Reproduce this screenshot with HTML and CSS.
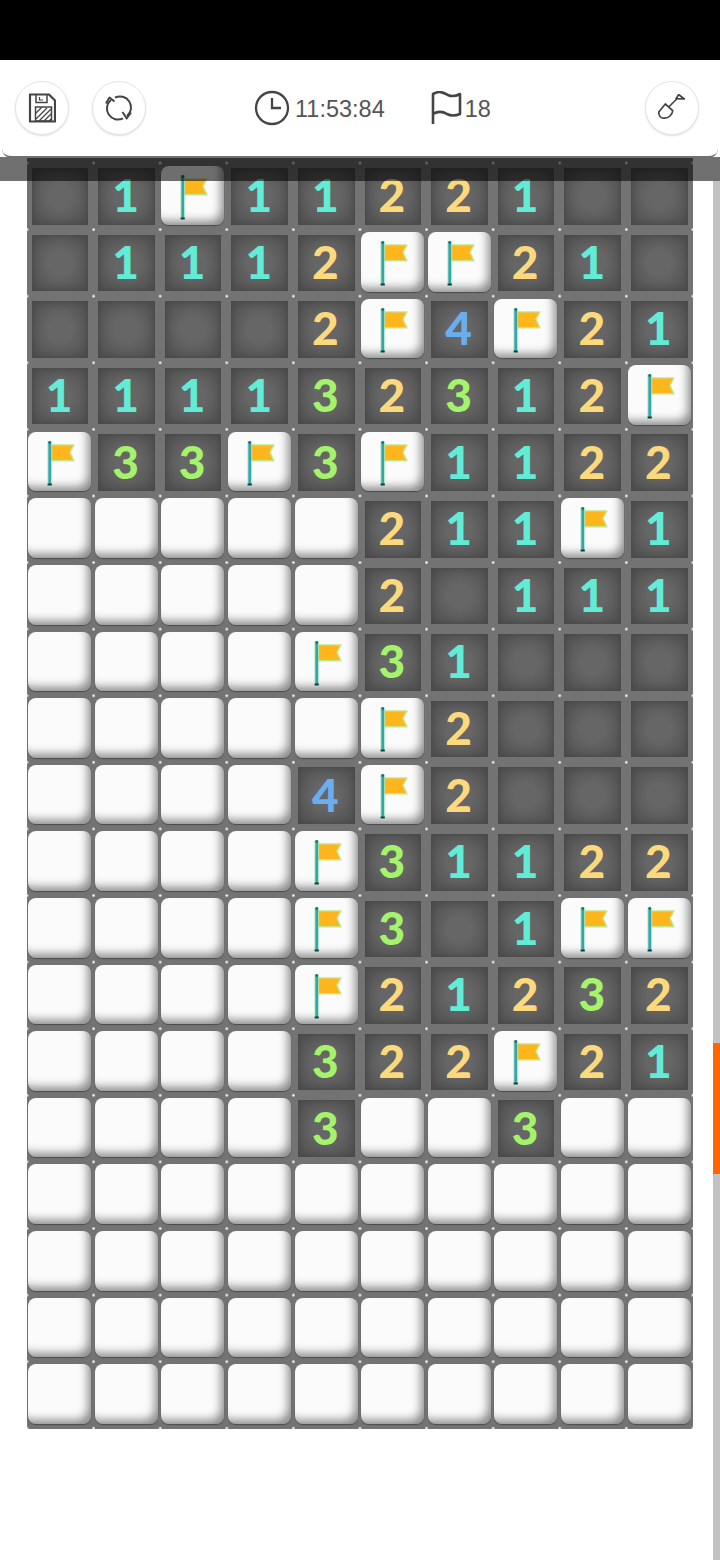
FILE: index.html
```html
<!DOCTYPE html>
<html>

<head>
    <meta charset="utf-8">
    <link rel="stylesheet" href="styles.css">
    <title>Minesweeper</title>
</head>

<body>
    <svg class="defs" width="0" height="0">
        <symbol id="flag" viewBox="0 0 63 60">
            <path d="M23 13 H46 L42 20.500 L46 29 H23 Z" fill="#ffb51c" stroke="#c4e88e" stroke-width="1.400" stroke-linejoin="round"/>
            <rect x="19" y="9.500" width="5.200" height="44" fill="#a9e6c0" opacity="0.600"/>
            <rect x="20.200" y="10" width="2.800" height="43" fill="#35a5a8"/>
            <rect x="20.200" y="9" width="2.800" height="3" rx="1.400" fill="#1f6f6c"/>
            <path d="M19.500 53.800 H23.700 V51.800 H19.500 Z" fill="#123f3c"/>
        </symbol>
    </svg>

    <div class="status"></div>

    <div class="top">
        <header class="toolbar">
            <button class="round">
                <svg width="28" height="30" viewBox="0 0 28 30" fill="none" stroke="#444" stroke-width="2.200">
                    <path d="M2 1.500 H21 L27 7.500 V28.500 H2 Z" stroke-linejoin="round"/>
                    <path d="M8 1.500 V9.500 H19 V1.500" stroke-width="1.500"/>
                    <path d="M11.500 4 V7 H15" stroke-width="1.200"/>
                    <path d="M7.500 14 H23.500 V28 H7.500 Z" stroke-width="1.500"/>
                    <path d="M8 20 L13.500 14.500 M8 26 L19 15 M11 28 L23 16 M16 28 L23 21 M21 28 L23 26" stroke-width="1.300"/>
                </svg>
            </button>
            <button class="round gap">
                <svg width="28" height="28" viewBox="0 0 28 28" fill="none" stroke="#444" stroke-width="2">
                    <path d="M10 3.700 A11 11 0 0 1 22 22"/>
                    <path d="M17.500 18 L21.700 24.500 L26 18.500" stroke-linejoin="round"/>
                    <path d="M18 24.300 A11 11 0 0 1 6 6"/>
                    <path d="M1 9.500 L4.500 3.500 L9.500 7.500" stroke-linejoin="round"/>
                </svg>
            </button>
            <div class="stats">
                <svg width="36" height="36" viewBox="0 0 36 36" fill="none" stroke="#444" stroke-width="2.300">
                    <circle cx="18" cy="18" r="16"/>
                    <path d="M18 8 V18 H27"/>
                </svg>
                <span class="time">11:53:84</span>
                <svg class="flag-ico" width="32" height="34" viewBox="0 0 32 34" fill="none" stroke="#444" stroke-width="2.600">
                    <path d="M3 33 V3 C10 -1 14 2 18 4 C22 6 26 5 30 3 V23 C25 25 21 25 17 23 C12 20 8 20 3 23" stroke-linejoin="round"/>
                </svg>
                <span class="count">18</span>
            </div>
            <button class="round right">
                <svg width="28" height="28" viewBox="0 0 28 28" fill="none" stroke="#444" stroke-width="1.700" stroke-linejoin="round">
                    <path d="M10.700 13 L19.700 4"/>
                    <path d="M20.700 0.500 L26.300 5 L18 4.700 Z"/>
                    <path d="M7.300 10 L14.700 16.700 C14.500 19 13.500 20.500 12 22 C10 24 7 24.500 4.500 24 C2 23.500 0.700 20.500 0.800 18 Z"/>
                </svg>
            </button>
        </header>
        <div class="band"></div>
    </div>

    <main class="board">
        <div class="cell open"></div><div class="cell open n1">1</div><div class="cell"><svg><use href="#flag"/></svg></div><div class="cell open n1">1</div><div class="cell open n1">1</div><div class="cell open n2">2</div><div class="cell open n2">2</div><div class="cell open n1">1</div><div class="cell open"></div><div class="cell open"></div>

        <div class="cell open"></div><div class="cell open n1">1</div><div class="cell open n1">1</div><div class="cell open n1">1</div><div class="cell open n2">2</div><div class="cell"><svg><use href="#flag"/></svg></div><div class="cell"><svg><use href="#flag"/></svg></div><div class="cell open n2">2</div><div class="cell open n1">1</div><div class="cell open"></div>

        <div class="cell open"></div><div class="cell open"></div><div class="cell open"></div><div class="cell open"></div><div class="cell open n2">2</div><div class="cell"><svg><use href="#flag"/></svg></div><div class="cell open n4">4</div><div class="cell"><svg><use href="#flag"/></svg></div><div class="cell open n2">2</div><div class="cell open n1">1</div>

        <div class="cell open n1">1</div><div class="cell open n1">1</div><div class="cell open n1">1</div><div class="cell open n1">1</div><div class="cell open n3">3</div><div class="cell open n2">2</div><div class="cell open n3">3</div><div class="cell open n1">1</div><div class="cell open n2">2</div><div class="cell"><svg><use href="#flag"/></svg></div>

        <div class="cell"><svg><use href="#flag"/></svg></div><div class="cell open n3">3</div><div class="cell open n3">3</div><div class="cell"><svg><use href="#flag"/></svg></div><div class="cell open n3">3</div><div class="cell"><svg><use href="#flag"/></svg></div><div class="cell open n1">1</div><div class="cell open n1">1</div><div class="cell open n2">2</div><div class="cell open n2">2</div>

        <div class="cell"></div><div class="cell"></div><div class="cell"></div><div class="cell"></div><div class="cell"></div><div class="cell open n2">2</div><div class="cell open n1">1</div><div class="cell open n1">1</div><div class="cell"><svg><use href="#flag"/></svg></div><div class="cell open n1">1</div>

        <div class="cell"></div><div class="cell"></div><div class="cell"></div><div class="cell"></div><div class="cell"></div><div class="cell open n2">2</div><div class="cell open"></div><div class="cell open n1">1</div><div class="cell open n1">1</div><div class="cell open n1">1</div>

        <div class="cell"></div><div class="cell"></div><div class="cell"></div><div class="cell"></div><div class="cell"><svg><use href="#flag"/></svg></div><div class="cell open n3">3</div><div class="cell open n1">1</div><div class="cell open"></div><div class="cell open"></div><div class="cell open"></div>

        <div class="cell"></div><div class="cell"></div><div class="cell"></div><div class="cell"></div><div class="cell"></div><div class="cell"><svg><use href="#flag"/></svg></div><div class="cell open n2">2</div><div class="cell open"></div><div class="cell open"></div><div class="cell open"></div>

        <div class="cell"></div><div class="cell"></div><div class="cell"></div><div class="cell"></div><div class="cell open n4">4</div><div class="cell"><svg><use href="#flag"/></svg></div><div class="cell open n2">2</div><div class="cell open"></div><div class="cell open"></div><div class="cell open"></div>

        <div class="cell"></div><div class="cell"></div><div class="cell"></div><div class="cell"></div><div class="cell"><svg><use href="#flag"/></svg></div><div class="cell open n3">3</div><div class="cell open n1">1</div><div class="cell open n1">1</div><div class="cell open n2">2</div><div class="cell open n2">2</div>

        <div class="cell"></div><div class="cell"></div><div class="cell"></div><div class="cell"></div><div class="cell"><svg><use href="#flag"/></svg></div><div class="cell open n3">3</div><div class="cell open"></div><div class="cell open n1">1</div><div class="cell"><svg><use href="#flag"/></svg></div><div class="cell"><svg><use href="#flag"/></svg></div>

        <div class="cell"></div><div class="cell"></div><div class="cell"></div><div class="cell"></div><div class="cell"><svg><use href="#flag"/></svg></div><div class="cell open n2">2</div><div class="cell open n1">1</div><div class="cell open n2">2</div><div class="cell open n3">3</div><div class="cell open n2">2</div>

        <div class="cell"></div><div class="cell"></div><div class="cell"></div><div class="cell"></div><div class="cell open n3">3</div><div class="cell open n2">2</div><div class="cell open n2">2</div><div class="cell"><svg><use href="#flag"/></svg></div><div class="cell open n2">2</div><div class="cell open n1">1</div>

        <div class="cell"></div><div class="cell"></div><div class="cell"></div><div class="cell"></div><div class="cell open n3">3</div><div class="cell"></div><div class="cell"></div><div class="cell open n3">3</div><div class="cell"></div><div class="cell"></div>

        <div class="cell"></div><div class="cell"></div><div class="cell"></div><div class="cell"></div><div class="cell"></div><div class="cell"></div><div class="cell"></div><div class="cell"></div><div class="cell"></div><div class="cell"></div>

        <div class="cell"></div><div class="cell"></div><div class="cell"></div><div class="cell"></div><div class="cell"></div><div class="cell"></div><div class="cell"></div><div class="cell"></div><div class="cell"></div><div class="cell"></div>

        <div class="cell"></div><div class="cell"></div><div class="cell"></div><div class="cell"></div><div class="cell"></div><div class="cell"></div><div class="cell"></div><div class="cell"></div><div class="cell"></div><div class="cell"></div>

        <div class="cell"></div><div class="cell"></div><div class="cell"></div><div class="cell"></div><div class="cell"></div><div class="cell"></div><div class="cell"></div><div class="cell"></div><div class="cell"></div><div class="cell"></div>
    </main>

    <div class="scrollbar"><div class="thumb"></div></div>
</body>

</html>
```

FILE: styles.css
```css
html, body {
    margin: 0;
    height: 1560px;
    overflow: hidden;
    background: #fff;
}

body {
    position: relative;
    font-family: "Liberation Sans", Arial, sans-serif;
}

.defs {
    position: absolute;
}

.status {
    height: 60px;
    background: #000;
}

.top {
    position: relative;
    z-index: 2;
    height: 97px;
}

.toolbar {
    position: relative;
    z-index: 1;
    box-sizing: border-box;
    display: flex;
    align-items: center;
    height: 98px;
    margin: 0 2px;
    padding: 0 19px 0 13px;
    background: #fff;
    border-bottom: 2px solid #707070;
    border-radius: 0 0 9px 9px;
}

.round {
    display: flex;
    align-items: center;
    justify-content: center;
    width: 54px;
    height: 54px;
    padding: 0;
    background: #fff;
    border: 1px solid #e6e6e6;
    border-radius: 50%;
    box-shadow: 0 1px 2px #ddd;
}

.gap {
    margin-left: 23px;
}

.right {
    margin-left: auto;
}

.stats {
    display: flex;
    align-items: center;
    margin-left: 108px;
    font-size: 23.500px;
    color: #555;
}

.time,
.count {
    padding-top: 3px;
}

.time {
    margin-left: 5px;
}

.flag-ico {
    margin: 0 3px 0 45px;
}

.band {
    position: absolute;
    top: 97px;
    left: 0;
    right: 0;
    height: 24px;
    background: rgba(0, 0, 0, 0.56);
}

.board {
    display: grid;
    grid-template-columns: repeat(10, 66.6px);
    grid-auto-rows: 66.6px;
    width: 666px;
    margin-left: 26.7px;
    padding: 6px 0 1px;
    background-color: #737373;
    background-image: radial-gradient(circle at center, #fff 0.7px, rgba(255, 255, 255, 0) 1.7px);
    background-size: 66.6px 66.6px;
    background-position: 33.3px 39.3px;
}

.cell {
    margin: 2.5px 2px 4.5px 1.5px;
    background: #fbfbfb;
    border-radius: 8px;
    box-shadow: inset -6px -7px 10px -3px rgba(0, 0, 0, 0.45), 0 1px 1px #4c4c4c;
}

.cell svg {
    display: block;
    width: 100%;
    height: 100%;
}

.open {
    display: flex;
    align-items: center;
    justify-content: center;
    margin: 5px;
    padding: 0 2px 3px 0;
    box-sizing: border-box;
    background: radial-gradient(circle at center, #666 30%, #525252 85%);
    border-radius: 0;
    box-shadow: inset 0 0 6px #444;
    font-family: Lato, "DejaVu Sans", sans-serif;
    font-weight: 900;
    font-size: 46px;
}

.n1 { color: #62ecd6; }
.n2 { color: #fcd97c; }
.n3 { color: #a5f36b; }
.n4 { color: #6aaef0; }

.scrollbar {
    position: absolute;
    top: 181px;
    right: 0;
    bottom: 0;
    width: 7px;
    background: #c2c2c2;
}

.thumb {
    height: 131px;
    margin-top: 862px;
    background: #ff6600;
}
```
